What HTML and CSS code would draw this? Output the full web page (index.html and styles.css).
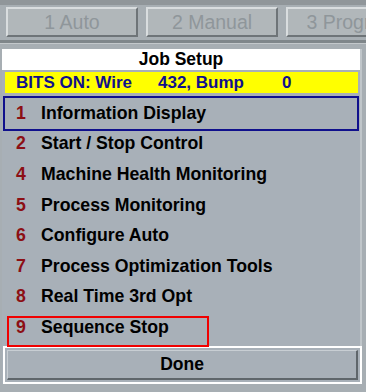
FILE: index.html
```html
<!DOCTYPE html>
<html>
<head>
<meta charset="utf-8">
<link rel="stylesheet" href="styles.css">
</head>
<body>
<div class="screen">
  <div class="topbar">
    <div class="tab">1 Auto</div>
    <div class="tab">2 Manual</div>
    <div class="tab">3 Program</div>
  </div>
  <div class="sep"></div>
  <div class="panel">
    <div class="title">Job Setup</div>
    <div class="body">
      <div class="bits"><span class="b1">BITS ON: Wire</span><span class="b2">432, Bump</span><span class="b3">0</span></div>
      <div class="list">
        <div class="row selected"><span class="num">1</span><span class="label">Information Display</span></div>
        <div class="row"><span class="num">2</span><span class="label">Start / Stop Control</span></div>
        <div class="row"><span class="num">4</span><span class="label">Machine Health Monitoring</span></div>
        <div class="row"><span class="num">5</span><span class="label">Process Monitoring</span></div>
        <div class="row"><span class="num">6</span><span class="label">Configure Auto</span></div>
        <div class="row"><span class="num">7</span><span class="label">Process Optimization Tools</span></div>
        <div class="row"><span class="num">8</span><span class="label">Real Time 3rd Opt</span></div>
        <div class="row marked"><span class="num">9</span><span class="label">Sequence Stop</span><span class="mark"></span></div>
      </div>
      <div class="doneframe"><div class="done">Done</div></div>
    </div>
  </div>
</div>
</body>
</html>
```
FILE: styles.css
```css
html, body {
  margin: 0;
  padding: 0;
}
body {
  background: #a7aeb3;
  font-family: "Liberation Sans", Arial, sans-serif;
  width: 366px;
  height: 392px;
  overflow: hidden;
}
.screen {
  width: 366px;
  height: 392px;
  overflow: hidden;
}
.topbar {
  border-top: 5px solid #90969a;
  padding: 2px 0 0 6px;
  height: 31px;
  display: flex;
  gap: 8px;
  white-space: nowrap;
  overflow: hidden;
}
.tab {
  flex: none;
  width: 128px;
  height: 26px;
  background: #b1b7ba;
  border-top: 2px solid #d9dddf;
  border-left: 2px solid #d9dddf;
  border-bottom: 2px solid #6e7478;
  border-right: 2px solid #6e7478;
  color: #8f969a;
  font-size: 19.5px;
  line-height: 26px;
  text-align: center;
  overflow: hidden;
}
.sep {
  margin-top: 2px;
  height: 3px;
  background: #7f868a;
  border-bottom: 1px solid #c3c8cb;
}
.panel {
  margin: 5px 0 0 2px;
  width: 358px;
  border-right: 2px solid #c0c6ca;
  background: #a8b0b8;
}
.title {
  background: #ffffff;
  height: 21px;
  line-height: 21px;
  text-align: center;
  font-weight: bold;
  font-size: 17.5px;
  color: #000;
}
.body {
  padding: 2px 0 0 1px;
}
.bits {
  margin: 0 2px 0 2px;
  height: 21px;
  background: #ffff00;
  color: #10108c;
  font-weight: bold;
  font-size: 17px;
  line-height: 21px;
  display: flex;
  white-space: pre;
}
.b1 { margin-left: 11px; width: 142px; }
.b2 { width: 124px; }
.list {
  margin-top: 5px;
}
.row {
  position: relative;
  height: 30.6px;
  display: flex;
  align-items: center;
  font-weight: bold;
  font-size: 17.7px;
  color: #000;
}
.num {
  color: #8c0f14;
  width: 38px;
  padding-left: 13px;
  box-sizing: border-box;
}
.selected {
  margin: 0 3px 0 2px;
  outline: 2px solid #10108c;
}
.selected .num { padding-left: 11px; width: 36px; }
.mark {
  position: absolute;
  left: 4px;
  top: 4px;
  width: 198px;
  height: 27px;
  border: 2px solid #f00000;
}
.doneframe {
  margin-top: 3px;
  width: 351px;
  border: 2px solid #ffffff;
  padding: 2px;
}
.done {
  height: 27px;
  background: #a8b0b8;
  border-top: 1px solid #c8ced3;
  border-left: 1px solid #c8ced3;
  border-bottom: 2px solid #5f666b;
  border-right: 2px solid #5f666b;
  text-align: center;
  font-weight: bold;
  font-size: 17.5px;
  line-height: 27px;
  color: #000;
}
```
